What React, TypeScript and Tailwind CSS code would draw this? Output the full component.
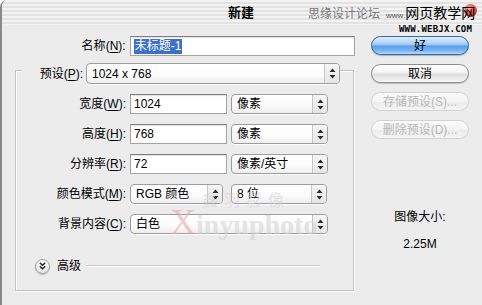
import React from "react";

const FONT = { fontFamily: '"Liberation Sans", "Noto Sans CJK SC", sans-serif' };

function Arrows() {
  return (
    <svg width="7" height="11" viewBox="0 0 7 11">
      <path d="M3.5 0.5 L6.5 4 L0.5 4 Z" fill="#2a2a2a" />
      <path d="M3.5 10.5 L6.5 7 L0.5 7 Z" fill="#2a2a2a" />
    </svg>
  );
}

function Select({ className, text, tall }: { className: string; text: string; tall?: boolean }) {
  return (
    <div
      className={`flex ${tall ? "h-[21px]" : "h-[20px]"} rounded-[4px] border border-[#9d9d9d] bg-[linear-gradient(180deg,#ffffff_0%,#fbfbfb_60%,#eeeeee_100%)] shadow-[0_1px_0_rgba(255,255,255,0.9)] ${className}`}
    >
      <div className="flex-1 flex items-center pl-[5px] text-[12px] text-black whitespace-nowrap">{text}</div>
      <div className="w-[15px] border-l border-[#c6c6c6] rounded-r-[3px] bg-[linear-gradient(180deg,#f6f6f6_0%,#e6e6e6_100%)] flex items-center justify-center">
        <Arrows />
      </div>
    </div>
  );
}

function Input({ className, children }: { className: string; children: React.ReactNode }) {
  return (
    <div
      className={`h-[20px] bg-white border border-[#a3a3a3] border-t-[#7d7d7d] shadow-[inset_0_1px_1px_rgba(0,0,0,0.12)] flex items-center pl-[3px] text-[12px] text-black ${className}`}
    >
      {children}
    </div>
  );
}

function Label({ main, k, className }: { main: string; k: string; className: string }) {
  return (
    <div className={`flex items-center justify-end text-[12px] text-black whitespace-nowrap ${className}`}>
      {main}(<span className="underline underline-offset-2">{k}</span>):
    </div>
  );
}

function AquaButton({ kind, children }: { kind: "blue" | "white" | "off"; children: React.ReactNode }) {
  const cls =
    kind === "blue"
      ? "border-[#3467a8] bg-[linear-gradient(180deg,#dcecfd_0%,#a9cff6_42%,#5d9fea_55%,#78b4f2_80%,#b5dafb_100%)] text-black shadow-[0_1px_1px_rgba(0,0,0,0.25)]"
      : kind === "white"
      ? "border-[#8f8f8f] bg-[linear-gradient(180deg,#ffffff_0%,#f5f5f5_42%,#dedede_55%,#ececec_80%,#fafafa_100%)] text-black shadow-[0_1px_1px_rgba(0,0,0,0.2)]"
      : "border-[#d3d3d3] bg-[linear-gradient(180deg,#fbfbfb_0%,#f4f4f4_50%,#ececec_55%,#f5f5f5_100%)] text-[#b8b8b8]";
  return (
    <div className={`w-[98px] h-[19px] rounded-full border flex items-center justify-center text-[12px] whitespace-nowrap ${cls}`}>
      {children}
    </div>
  );
}

export default function App() {
  return (
    <div className="w-[482px] h-[305px] bg-white" style={FONT}>
      <div className="relative w-full h-full bg-[#ececec] border-l-2 border-[#8a8a8a] rounded-tl-[7px] overflow-hidden flex flex-col">
        {/* title bar */}
        <div className="relative h-[25px] shrink-0 bg-[repeating-linear-gradient(180deg,#f3f3f3_0px,#f3f3f3_2px,#e3e3e3_2px,#e3e3e3_4px)] flex items-center justify-center">
          <span className="text-[13px] font-bold text-black -ml-[2px]">新建</span>
          {/* site watermark */}
          <div className="absolute left-[462px] top-[4px] w-[13px] h-[13px] rounded-full bg-[radial-gradient(circle_at_40%_35%,#f7b9ad_0%,#e0453a_55%,#9c1f19_100%)]" />
          <div className="absolute left-[306px] top-[5px] flex items-baseline whitespace-nowrap">
            <span className="text-[12px] text-[#7a7a7a]">思缘设计论坛</span>
            <span className="ml-[6px] text-[8px] text-[#555]">www.</span>
            <span className="text-[14px] leading-[14px] text-black">网页教学网</span>
          </div>
        </div>
        <div className="absolute left-[397px] top-[25px] text-[9px] leading-[9px] font-bold tracking-[0.2px] text-black whitespace-nowrap" style={{ fontFamily: '"DejaVu Sans Mono", monospace' }}>
          WWW.WEBJX.COM
        </div>

        {/* body */}
        <div className="flex flex-1">
          {/* left */}
          <div className="w-[353px] shrink-0 flex flex-col pt-[11px]">
            <div className="flex items-center">
              <Label main="名称" k="N" className="w-[124px]" />
              <Input className="ml-[4px] w-[226px]">
                <span className="bg-[#3d70c8] text-white px-[1px] leading-[15px]">未标题-1</span>
              </Input>
            </div>

            {/* group box */}
            <div className="ml-[13px] mt-[14px] w-[339px] h-[221px] border border-[#c2c2c2] shadow-[inset_1px_1px_0_#ffffff,1px_1px_0_#ffffff] flex flex-col">
              <div className="flex -mt-[8px] ml-[6px]">
                <Label main="预设" k="P" className="w-[64px] pr-[3px] bg-[#ececec]" />
                <Select tall className="w-[254px]" text="1024 x 768" />
              </div>

              <div className="flex flex-col gap-[10px] mt-[10px]">
                <div className="flex items-center">
                  <Label main="宽度" k="W" className="w-[110px]" />
                  <Input className="ml-[4px] w-[97px]">1024</Input>
                  <Select className="ml-[4px] w-[97px]" text="像素" />
                </div>
                <div className="flex items-center">
                  <Label main="高度" k="H" className="w-[110px]" />
                  <Input className="ml-[4px] w-[97px]">768</Input>
                  <Select className="ml-[4px] w-[97px]" text="像素" />
                </div>
                <div className="flex items-center">
                  <Label main="分辨率" k="R" className="w-[110px]" />
                  <Input className="ml-[4px] w-[97px]">72</Input>
                  <Select className="ml-[4px] w-[97px]" text="像素/英寸" />
                </div>
                <div className="flex items-center">
                  <Label main="颜色模式" k="M" className="w-[110px]" />
                  <Select className="ml-[4px] w-[93px]" text="RGB 颜色" />
                  <Select className="ml-[8px] w-[96px]" text="8 位" />
                </div>
                <div className="flex items-center">
                  <Label main="背景内容" k="C" className="w-[110px]" />
                  <Select className="ml-[4px] w-[198px]" text="白色" />
                </div>
              </div>

              <div className="flex items-center mt-[23px] ml-[19px]">
                <div className="w-[15px] h-[15px] rounded-full border border-[#9a9a9a] bg-[linear-gradient(180deg,#ffffff_0%,#e4e4e4_100%)] shadow-[0_1px_1px_rgba(0,0,0,0.2)] flex items-center justify-center">
                  <svg width="7" height="8" viewBox="0 0 7 8">
                    <path d="M0.8 0.8 L3.5 3.3 L6.2 0.8" stroke="#222" strokeWidth="1.4" fill="none" />
                    <path d="M0.8 4.3 L3.5 6.8 L6.2 4.3" stroke="#222" strokeWidth="1.4" fill="none" />
                  </svg>
                </div>
                <span className="ml-[7px] text-[12px] text-black">高级</span>
                <div className="ml-[5px] w-[234px] h-[2px] border-t border-[#cdcdcd] border-b border-b-white" />
              </div>
            </div>
          </div>

          {/* right */}
          <div className="flex flex-col items-center pl-[16px] pt-[11px] w-[114px]">
            <div className="flex flex-col gap-[9px]">
              <AquaButton kind="blue">好</AquaButton>
              <AquaButton kind="white">取消</AquaButton>
              <AquaButton kind="off">存储预设(S)...</AquaButton>
              <AquaButton kind="off">删除预设(D)...</AquaButton>
            </div>
            <div className="mt-[69px] text-[12px] text-black">图像大小:</div>
            <div className="mt-[9px] text-[12px] text-black">2.25M</div>
          </div>
        </div>

        {/* photo watermark */}
        <div className="pointer-events-none absolute left-[200px] top-[191px] text-[16px] leading-[16px] text-[#d6d6d6] tracking-[6px] whitespace-nowrap opacity-60" style={{ fontFamily: '"Noto Sans CJK SC", sans-serif' }}>
          鑫羽影像
        </div>
        <div className="pointer-events-none absolute left-[168px] top-[204px] flex items-baseline whitespace-nowrap opacity-55" style={{ fontFamily: '"Liberation Serif", serif' }}>
          <span className="text-[36px] leading-[36px] text-[#e8a3a3]">X</span>
          <span className="text-[28px] leading-[28px] font-bold text-[#d2d2d2]">inyuphoto</span>
        </div>
      </div>
    </div>
  );
}
